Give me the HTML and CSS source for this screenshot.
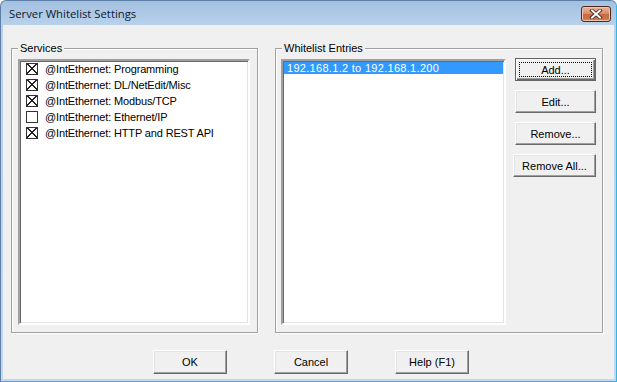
FILE: index.html
```html
<!DOCTYPE html>
<html lang="en">
	<head>
		<meta charset="UTF-8" />
		<title>Server Whitelist Settings</title>
		<link rel="stylesheet" href="styles.css">
	</head>

	<body>
		<div class="window">
			<div class="titlebar">
				<span class="title">Server Whitelist Settings</span>
				<button class="close" title="Close">
					<svg width="14" height="10" viewBox="0 0 14 10">
						<path d="M3 1.5 L11 8.5 M11 1.5 L3 8.5" stroke="#3a2018" stroke-width="3.6" stroke-linecap="square" />
						<path d="M3 1.5 L11 8.5 M11 1.5 L3 8.5" stroke="#fff" stroke-width="2" stroke-linecap="square" />
					</svg>
				</button>
			</div>

			<div class="client">
				<div class="groups">
					<div class="group services">
						<span class="group-label">Services</span>
						<ul class="listbox checklist">
							<li><span class="check on"></span>@IntEthernet: Programming</li>
							<li><span class="check on"></span>@IntEthernet: DL/NetEdit/Misc</li>
							<li><span class="check on"></span>@IntEthernet: Modbus/TCP</li>
							<li><span class="check"></span>@IntEthernet: Ethernet/IP</li>
							<li><span class="check on"></span>@IntEthernet: HTTP and REST API</li>
						</ul>
					</div>

					<div class="group whitelist">
						<span class="group-label">Whitelist Entries</span>
						<ul class="listbox entries">
							<li class="selected">192.168.1.2 to 192.168.1.200</li>
						</ul>
						<div class="side-buttons">
							<button class="btn default"><span class="focus">Add...</span></button>
							<button class="btn">Edit...</button>
							<button class="btn">Remove...</button>
							<button class="btn wide">Remove All...</button>
						</div>
					</div>
				</div>

				<div class="dialog-buttons">
					<button class="btn">OK</button>
					<button class="btn">Cancel</button>
					<button class="btn">Help (F1)</button>
				</div>
			</div>
		</div>
	</body>
</html>
```

FILE: styles.css
```css
:root {
	--face:      #f0f0f0;
	--shadow:    #a0a0a0;
	--dk-shadow: #696969;
	--light:     #e3e3e3;
	--hilite:    #ffffff;
	--select:    #3399ff;
}

html, body {
	margin: 0;
	padding: 0;
}

body {
	background: #fff;
	font-family: "Liberation Sans", Arial, sans-serif;
	font-size: 11px;
	color: #000;
}

.window {
	box-sizing: border-box;
	width: 617px;
	height: 382px;
	display: flex;
	flex-direction: column;
	padding: 0 2px 2px;
	border: 1px solid #5d7ea6;
	border-right-color: #36b5e5;
	border-bottom-color: #36b5e5;
	border-radius: 6px 6px 0 0;
	background: linear-gradient(#a3c0e0, #b9d1ea 24px, #c3d8ee);
}

.titlebar {
	height: 24px;
	flex-shrink: 0;
	display: flex;
	align-items: center;
	justify-content: space-between;
	padding: 0 3px 0 6px;
}
.title {
	font-family: "Open Sans", "Noto Sans", sans-serif;
	font-size: 11.3px;
	color: #0b1a2e;
	padding-top: 1px;
}
.close {
	width: 30px;
	height: 16px;
	margin-top: 1px;
	padding: 0;
	display: flex;
	align-items: center;
	justify-content: center;
	border: 1px solid #4b2a22;
	border-radius: 3px;
	background: linear-gradient(#e8b197, #dc906e 45%, #c9683f 55%, #cf7d57);
	box-shadow: inset 0 0 0 1px #f0c3ad;
}

.client {
	flex-grow: 1;
	background: var(--face);
	padding: 23px 11px 5px 8px;
	display: flex;
	flex-direction: column;
}

.groups {
	display: flex;
	gap: 17px;
	height: 285px;
}

.group {
	position: relative;
	box-sizing: border-box;
	height: 285px;
	border: 1px solid var(--shadow);
	box-shadow: inset 1px 1px var(--hilite), 1px 1px var(--hilite);
	display: flex;
}
.group-label {
	position: absolute;
	top: -7px;
	left: 6px;
	padding: 0 2px;
	background: var(--face);
	line-height: 13px;
}
.services {
	width: 247px;
	padding: 10px 7px 7px 6px;
}
.whitelist {
	width: 328px;
	padding: 10px 6px 7px 5px;
}

.listbox {
	box-sizing: border-box;
	list-style: none;
	margin: 0;
	padding: 0;
	background: #fff;
	border: 2px solid;
	border-color: var(--shadow) var(--hilite) var(--hilite) var(--shadow);
	box-shadow: inset 1px 1px var(--dk-shadow), inset -1px -1px var(--light);
}
.checklist {
	width: 232px;
	padding-top: 0;
}
.checklist li {
	height: 16px;
	display: flex;
	align-items: center;
	padding-left: 6px;
	white-space: nowrap;
	letter-spacing: -0.15px;
}
.check {
	box-sizing: border-box;
	width: 12px;
	height: 12px;
	margin-right: 7px;
	border: 1px solid #333;
	background: #fff;
}
.check.on {
	background:
		linear-gradient(45deg, transparent 46%, #222 46%, #222 56%, transparent 56%),
		linear-gradient(-45deg, transparent 46%, #222 46%, #222 56%, transparent 56%),
		#fff;
}

.entries {
	width: 225px;
	padding: 1px;
}
.entries li {
	height: 12px;
	line-height: 12px;
	padding-left: 3px;
	white-space: nowrap;
	letter-spacing: 0.3px;
}
.entries .selected {
	background: var(--select);
	color: #fff;
}

.side-buttons {
	width: 83px;
	margin-left: 7px;
	margin-top: -1px;
	display: flex;
	flex-direction: column;
	align-items: flex-end;
	gap: 9px;
}

.btn {
	box-sizing: border-box;
	width: 81px;
	height: 23px;
	padding: 0;
	font-family: inherit;
	font-size: 11px;
	color: #000;
	background: var(--face);
	border: 1px solid;
	border-color: var(--hilite) var(--dk-shadow) var(--dk-shadow) var(--hilite);
	box-shadow: inset -1px -1px var(--shadow), inset 1px 1px var(--light);
}
.btn.wide {
	width: 83px;
}
.btn.default {
	border: 1px solid #646464;
	box-shadow: inset 1px 1px var(--hilite), inset -1px -1px var(--dk-shadow), inset -2px -2px var(--shadow);
	display: flex;
	padding: 3px;
}
.btn .focus {
	flex-grow: 1;
	display: flex;
	align-items: center;
	justify-content: center;
	border: 1px dotted #000;
}

.dialog-buttons {
	margin-top: 17px;
	display: flex;
	gap: 47px;
	padding-left: 142px;
}
.dialog-buttons .btn {
	width: 74px;
	height: 24px;
}
```
